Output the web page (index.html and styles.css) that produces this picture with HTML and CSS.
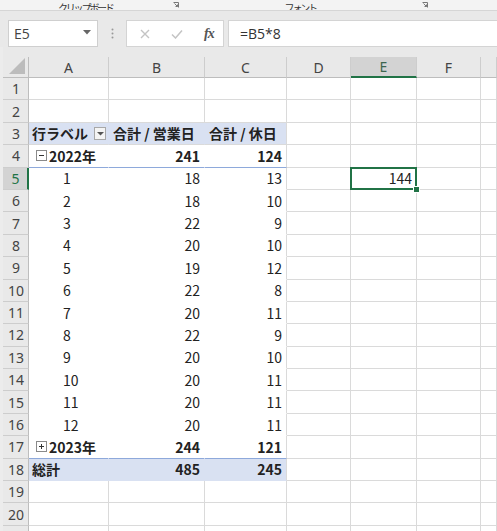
FILE: index.html
```html
<!DOCTYPE html>
<html lang="ja">
<head>
<meta charset="utf-8">
<link rel="stylesheet" href="styles.css">
</head>
<body>
<div class="app">
  <div class="ribbon">
    <span class="rlabel clip">クリップボード</span>
    <span class="launch l1"><svg width="6" height="6" viewBox="0 0 6 6"><path d="M0.5 0.5H5.5V5.5" fill="none" stroke="#777" stroke-width="1"/><path d="M1.5 1.5L4.5 4.5M4.5 2.5V4.5H2.5" fill="none" stroke="#777" stroke-width="1"/></svg></span>
    <span class="rlabel font">フォント</span>
    <span class="launch l2"><svg width="6" height="6" viewBox="0 0 6 6"><path d="M0.5 0.5H5.5V5.5" fill="none" stroke="#777" stroke-width="1"/><path d="M1.5 1.5L4.5 4.5M4.5 2.5V4.5H2.5" fill="none" stroke="#777" stroke-width="1"/></svg></span>
  </div>
  <div class="fbar">
    <div class="namebox"><span>E5</span><svg class="nbarrow" width="8" height="5" viewBox="0 0 8 5"><path d="M0 0H8L4 4.5Z" fill="#666"/></svg></div>
    <div class="dots"><svg width="3" height="11" viewBox="0 0 3 11"><circle cx="1.5" cy="1.5" r="1" fill="#999"/><circle cx="1.5" cy="5.5" r="1" fill="#999"/><circle cx="1.5" cy="9.5" r="1" fill="#999"/></svg></div>
    <div class="fxbtns">
      <svg class="bx" width="10" height="10" viewBox="0 0 10 10"><path d="M1 1L9 9M9 1L1 9" stroke="#c4c4c4" stroke-width="1.4"/></svg>
      <svg class="bc" width="12" height="10" viewBox="0 0 12 10"><path d="M1 5.5L4.5 9L11 1.5" fill="none" stroke="#c4c4c4" stroke-width="1.5"/></svg>
      <span class="fx">fx</span>
    </div>
    <div class="finput">=B5*8</div>
  </div>
  <div class="sheet">
    <div class="row hdr">
      <div class="rh corner"><svg width="16" height="16" viewBox="0 0 16 16"><path d="M16 0V16H0Z" fill="#bcbcbc"/></svg></div>
      <div class="ch a">A</div><div class="ch b">B</div><div class="ch c">C</div><div class="ch d">D</div><div class="ch e sel">E</div><div class="ch f">F</div><div class="ch g"></div>
    </div>

    <div class="row"><div class="rh">1</div><div class="cell a"></div><div class="cell b"></div><div class="cell c"></div><div class="cell d"></div><div class="cell e"></div><div class="cell f"></div><div class="cell g"></div></div>
    <div class="row"><div class="rh">2</div><div class="cell a"></div><div class="cell b"></div><div class="cell c"></div><div class="cell d"></div><div class="cell e"></div><div class="cell f"></div><div class="cell g"></div></div>

    <div class="row"><div class="rh">3</div>
      <div class="cell a band in bold lbl"><span>行ラベル</span><span class="ddbtn"><svg width="7" height="4" viewBox="0 0 7 4"><path d="M0 0H7L3.5 3.5Z" fill="#555"/></svg></span></div>
      <div class="cell b band in bold lhead">合計 / 営業日</div>
      <div class="cell c band bold lhead">合計 / 休日</div>
      <div class="cell d"></div><div class="cell e"></div><div class="cell f"></div><div class="cell g"></div></div>

    <div class="row"><div class="rh">4</div>
      <div class="cell a in bold ul yr"><svg class="exp" width="11" height="11" viewBox="0 0 11 11"><rect x="0.5" y="0.5" width="10" height="10" fill="#fff" stroke="#8a8a8a"/><path d="M3 5.5H8" stroke="#333"/></svg>2022年</div>
      <div class="cell b in bold ul num">241</div>
      <div class="cell c bold ul num">124</div>
      <div class="cell d"></div><div class="cell e"></div><div class="cell f"></div><div class="cell g"></div></div>

    <div class="row"><div class="rh sel">5</div><div class="cell a in nb item">1</div><div class="cell b in nb num">18</div><div class="cell c nb num">13</div><div class="cell d"></div><div class="cell e num active">144</div><div class="cell f"></div><div class="cell g"></div></div>
    <div class="row"><div class="rh">6</div><div class="cell a in nb item">2</div><div class="cell b in nb num">18</div><div class="cell c nb num">10</div><div class="cell d"></div><div class="cell e"></div><div class="cell f"></div><div class="cell g"></div></div>
    <div class="row"><div class="rh">7</div><div class="cell a in nb item">3</div><div class="cell b in nb num">22</div><div class="cell c nb num">9</div><div class="cell d"></div><div class="cell e"></div><div class="cell f"></div><div class="cell g"></div></div>
    <div class="row"><div class="rh">8</div><div class="cell a in nb item">4</div><div class="cell b in nb num">20</div><div class="cell c nb num">10</div><div class="cell d"></div><div class="cell e"></div><div class="cell f"></div><div class="cell g"></div></div>
    <div class="row"><div class="rh">9</div><div class="cell a in nb item">5</div><div class="cell b in nb num">19</div><div class="cell c nb num">12</div><div class="cell d"></div><div class="cell e"></div><div class="cell f"></div><div class="cell g"></div></div>
    <div class="row"><div class="rh">10</div><div class="cell a in nb item">6</div><div class="cell b in nb num">22</div><div class="cell c nb num">8</div><div class="cell d"></div><div class="cell e"></div><div class="cell f"></div><div class="cell g"></div></div>
    <div class="row"><div class="rh">11</div><div class="cell a in nb item">7</div><div class="cell b in nb num">20</div><div class="cell c nb num">11</div><div class="cell d"></div><div class="cell e"></div><div class="cell f"></div><div class="cell g"></div></div>
    <div class="row"><div class="rh">12</div><div class="cell a in nb item">8</div><div class="cell b in nb num">22</div><div class="cell c nb num">9</div><div class="cell d"></div><div class="cell e"></div><div class="cell f"></div><div class="cell g"></div></div>
    <div class="row"><div class="rh">13</div><div class="cell a in nb item">9</div><div class="cell b in nb num">20</div><div class="cell c nb num">10</div><div class="cell d"></div><div class="cell e"></div><div class="cell f"></div><div class="cell g"></div></div>
    <div class="row"><div class="rh">14</div><div class="cell a in nb item">10</div><div class="cell b in nb num">20</div><div class="cell c nb num">11</div><div class="cell d"></div><div class="cell e"></div><div class="cell f"></div><div class="cell g"></div></div>
    <div class="row"><div class="rh">15</div><div class="cell a in nb item">11</div><div class="cell b in nb num">20</div><div class="cell c nb num">11</div><div class="cell d"></div><div class="cell e"></div><div class="cell f"></div><div class="cell g"></div></div>
    <div class="row"><div class="rh">16</div><div class="cell a in nb item">12</div><div class="cell b in nb num">20</div><div class="cell c nb num">11</div><div class="cell d"></div><div class="cell e"></div><div class="cell f"></div><div class="cell g"></div></div>

    <div class="row"><div class="rh">17</div>
      <div class="cell a in bold ul yr"><svg class="exp" width="11" height="11" viewBox="0 0 11 11"><rect x="0.5" y="0.5" width="10" height="10" fill="#fff" stroke="#8a8a8a"/><path d="M3 5.5H8M5.5 3V8" stroke="#333"/></svg>2023年</div>
      <div class="cell b in bold ul num">244</div>
      <div class="cell c bold ul num">121</div>
      <div class="cell d"></div><div class="cell e"></div><div class="cell f"></div><div class="cell g"></div></div>

    <div class="row"><div class="rh">18</div>
      <div class="cell a band in bold bb lbl">総計</div>
      <div class="cell b band in bold bb num">485</div>
      <div class="cell c band bold bb num">245</div>
      <div class="cell d"></div><div class="cell e"></div><div class="cell f"></div><div class="cell g"></div></div>

    <div class="row"><div class="rh">19</div><div class="cell a"></div><div class="cell b"></div><div class="cell c"></div><div class="cell d"></div><div class="cell e"></div><div class="cell f"></div><div class="cell g"></div></div>
    <div class="row"><div class="rh">20</div><div class="cell a"></div><div class="cell b"></div><div class="cell c"></div><div class="cell d"></div><div class="cell e"></div><div class="cell f"></div><div class="cell g"></div></div>
    <div class="row"><div class="rh"></div><div class="cell a"></div><div class="cell b"></div><div class="cell c"></div><div class="cell d"></div><div class="cell e"></div><div class="cell f"></div><div class="cell g"></div></div>
  </div>
</div>
</body>
</html>
```
FILE: styles.css
```css
html, body {
  margin: 0;
  padding: 0;
  background: #ffffff;
}
.app {
  width: 497px;
  height: 531px;
  overflow: hidden;
  font-family: "Noto Sans CJK JP", "Noto Sans", sans-serif;
  color: #222;
}
.ribbon {
  height: 10px;
  background: #f3f3f3;
  border-bottom: 1px solid #d6d6d6;
  display: flex;
  align-items: flex-end;
  overflow: hidden;
}
.rlabel {
  font-size: 10px;
  line-height: 10px;
  letter-spacing: -2.2px;
  color: #333;
  margin-bottom: -3px;
}
.rlabel.clip { margin-left: 58px; }
.launch { display: flex; align-self: flex-start; margin-top: 2px; }
.launch.l1 { margin-left: 60px; }
.rlabel.font { margin-left: 106px; }
.launch.l2 { margin-left: 106px; }

.fbar {
  height: 36px;
  box-sizing: border-box;
  background: #e9e9e9;
  display: flex;
  align-items: flex-start;
  padding: 9px 0 0 8px;
}
.namebox {
  width: 90px;
  height: 27px;
  box-sizing: border-box;
  background: #fff;
  border: 1px solid #cfcfcf;
  display: flex;
  align-items: center;
  justify-content: space-between;
  padding: 0 6px 0 5px;
  font-family: "Open Sans", "Noto Sans", sans-serif;
  font-size: 14px;
  color: #444;
}
.nbarrow { margin-top: -2px; }
.dots {
  width: 28px;
  height: 27px;
  display: flex;
  align-items: center;
  justify-content: center;
}
.fxbtns {
  width: 98px;
  height: 27px;
  box-sizing: border-box;
  background: #fff;
  border: 1px solid #d4d4d4;
  display: flex;
  align-items: center;
  margin-right: 4px;
}
.bx { margin-left: 13px; }
.bc { margin-left: 21px; }
.fx {
  margin-left: 21px;
  font-family: "Liberation Serif", serif;
  font-style: italic;
  font-weight: bold;
  font-size: 14px;
  color: #555;
  letter-spacing: -1px;
}
.finput {
  flex: 1;
  height: 27px;
  box-sizing: border-box;
  background: #fff;
  border: 1px solid #d4d4d4;
  border-right: none;
  display: flex;
  align-items: center;
  padding-left: 11px;
  font-family: "Open Sans", "Noto Sans", sans-serif;
  font-size: 14px;
  color: #333;
}

.sheet {
  background: #e9e9e9;
  padding-top: 10px;
  border-left: 3px solid #ececec;
}
.row {
  display: flex;
  height: 22.4px;
}
.row.hdr {
  height: 21px;
}
.rh {
  width: 26px;
  flex: none;
  box-sizing: border-box;
  background: #e9e9e9;
  border-right: 1px solid #bdbdbd;
  border-bottom: 1px solid #cdcdcd;
  display: flex;
  align-items: center;
  justify-content: center;
  font-family: "Noto Sans", sans-serif;
  font-size: 14px;
  color: #444;
  padding-left: 1px;
}
.rh.sel {
  background: #d3d3d3;
  border-right: 2px solid #217346;
  color: #217346;
}
.rh.corner {
  border-bottom: 1px solid #bdbdbd;
  align-items: flex-end;
  justify-content: flex-end;
  padding: 0 3px 3px 0;
}
.ch {
  flex: none;
  box-sizing: border-box;
  background: #e9e9e9;
  border-right: 1px solid #cdcdcd;
  border-bottom: 1px solid #bdbdbd;
  display: flex;
  align-items: center;
  justify-content: center;
  font-family: "Noto Sans", sans-serif;
  font-size: 14px;
  color: #444;
}
.ch.sel {
  background: #d3d3d3;
  border-bottom: 2px solid #217346;
  color: #3c6650;
}
.a { width: 80px; }
.b { width: 96px; }
.c { width: 82px; }
.d { width: 64px; }
.e { width: 66px; }
.f { width: 64px; }
.ch.g, .cell.g { flex: 1; }

.cell {
  flex: none;
  box-sizing: border-box;
  background: #fff;
  border-right: 1px solid #dadada;
  border-bottom: 1px solid #dadada;
  display: flex;
  align-items: center;
  padding: 0 4px;
  font-size: 14px;
  line-height: 1;
  color: #222;
  white-space: nowrap;
}
.cell.in { border-right-color: transparent; }
.cell.band.in { border-right-color: #d9e1f2; }
.cell.band { background: #d9e1f2; }
.cell.nb { border-bottom-color: #fff; }
.cell.in.nb { border-right-color: #fff; }
.cell.ul { border-bottom-color: #8ea9db; }
.cell.in.ul { border-right-color: #fff; }
.cell.bb { border-bottom-color: #d9e1f2; }
.bold { font-weight: bold; }
.num { justify-content: flex-end; }
.lbl { padding-left: 3px; justify-content: space-between; padding-right: 2px; }
.lhead { padding-left: 4px; }
.item { padding-left: 34px; }
.yr { padding-left: 7px; }
.exp { margin-right: 2px; flex: none; }
.ddbtn {
  width: 12px;
  height: 13px;
  box-sizing: border-box;
  border: 1px solid #a8a8a8;
  background: #f4f4f4;
  display: flex;
  align-items: flex-end;
  justify-content: center;
  padding-bottom: 3px;
  margin-top: 1px;
}
.cell.active {
  position: relative;
}
.cell.active::before {
  content: "";
  position: absolute;
  left: -1px;
  top: -1px;
  right: -1px;
  bottom: -1px;
  border: 2px solid #217346;
}
.cell.active::after {
  content: "";
  position: absolute;
  right: -4px;
  bottom: -4px;
  width: 5px;
  height: 5px;
  background: #217346;
  border: 1px solid #fff;
}
```
